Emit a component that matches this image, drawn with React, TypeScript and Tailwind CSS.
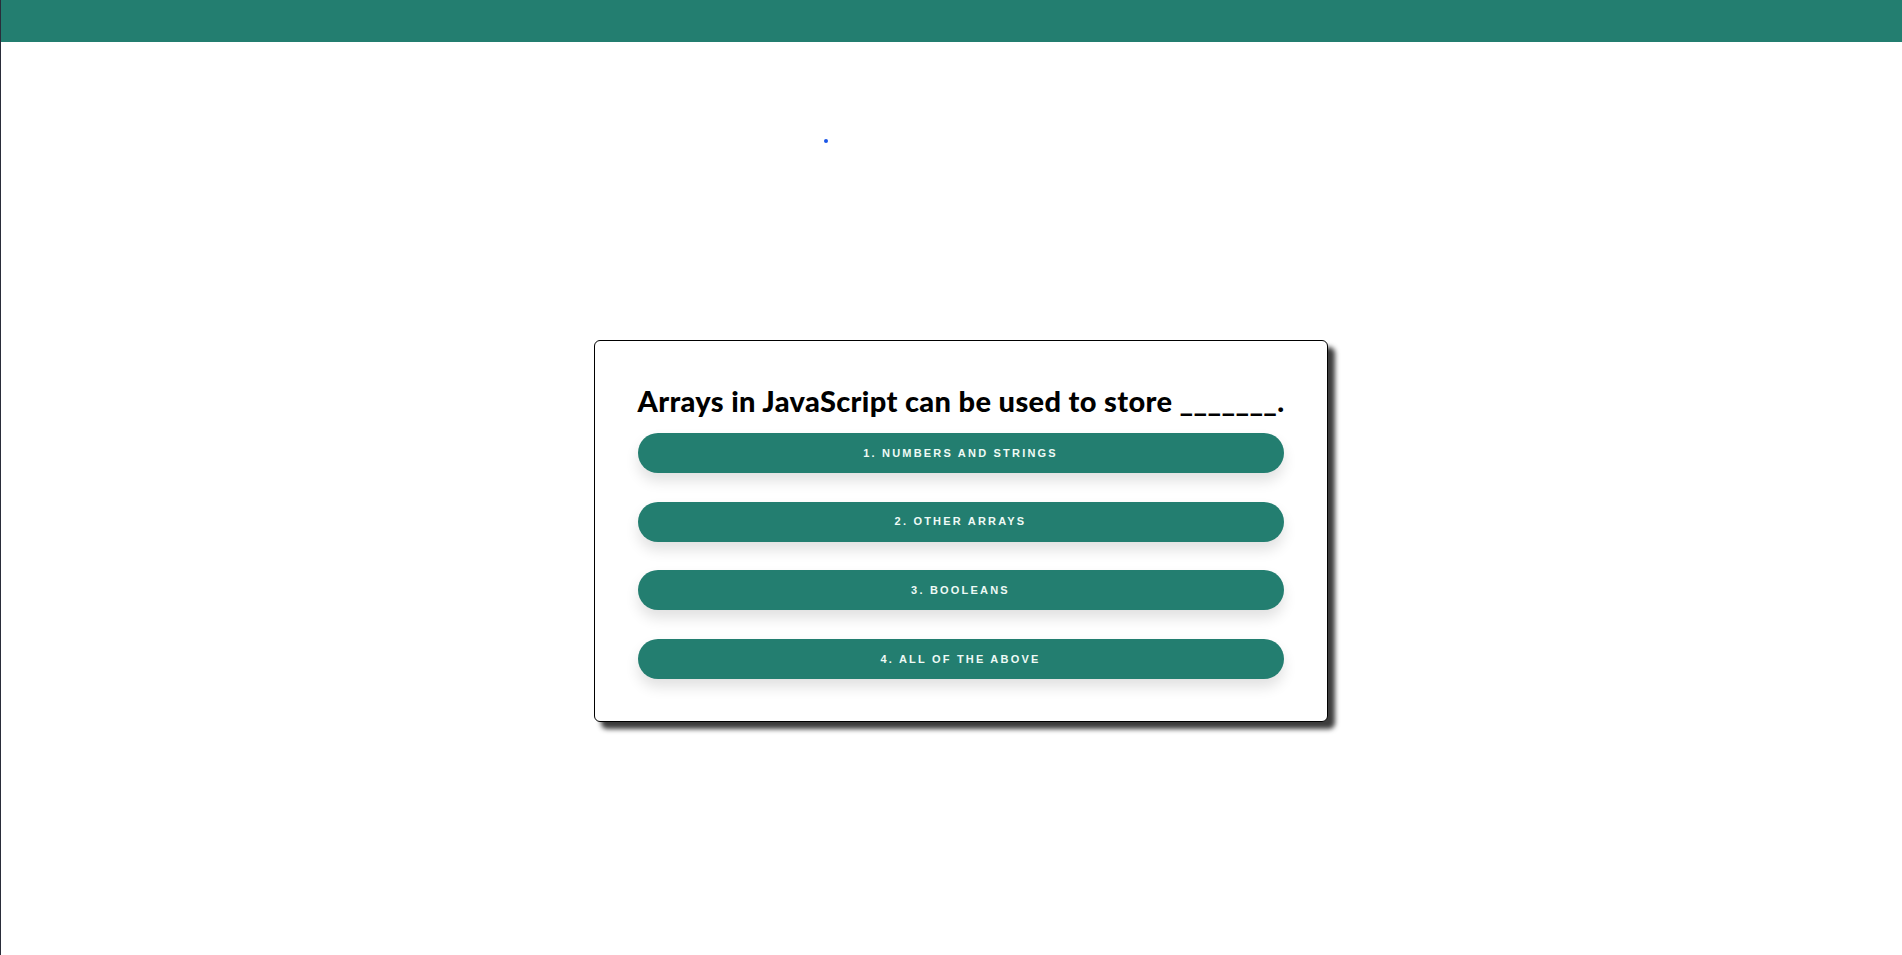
const answers = ["1. Numbers and strings", "2. Other arrays", "3. Booleans", "4. All of the above"];

export default function App() {
  return (
    <div className="relative min-h-screen border-l border-[#2a2d3a] bg-white">
      <header className="h-[42px] bg-[#237e70]" />

      {/* stray focus dot */}
      <span className="absolute left-[823px] top-[139px] h-[4px] w-[4px] rounded-full bg-[#1a56e8]" />

      <main className="flex justify-center pl-[18px] pt-[298px]">
        <section className="w-[734px] rounded-md border border-black bg-white px-[43px] pb-[42px] pt-[43px] shadow-[7px_7px_5px_#3c3c3c]">
          <h1 className="mb-[15px] whitespace-nowrap font-['Lato',sans-serif] text-[29px] font-black leading-[34px] tracking-[0.012em] text-black">
            Arrays in JavaScript can be used to store _______.
          </h1>
          <div className="flex flex-col gap-[28.6px]">
            {answers.map((a) => (
              <button
                key={a}
                className="h-[40px] w-full rounded-full bg-[#237e70] font-['Liberation_Sans',Arial,sans-serif] text-[11px] font-bold uppercase tracking-[0.2em] text-[#eefaf6] shadow-[0_8px_14px_rgba(0,0,0,0.12)]"
              >
                {a}
              </button>
            ))}
          </div>
        </section>
      </main>
    </div>
  );
}
